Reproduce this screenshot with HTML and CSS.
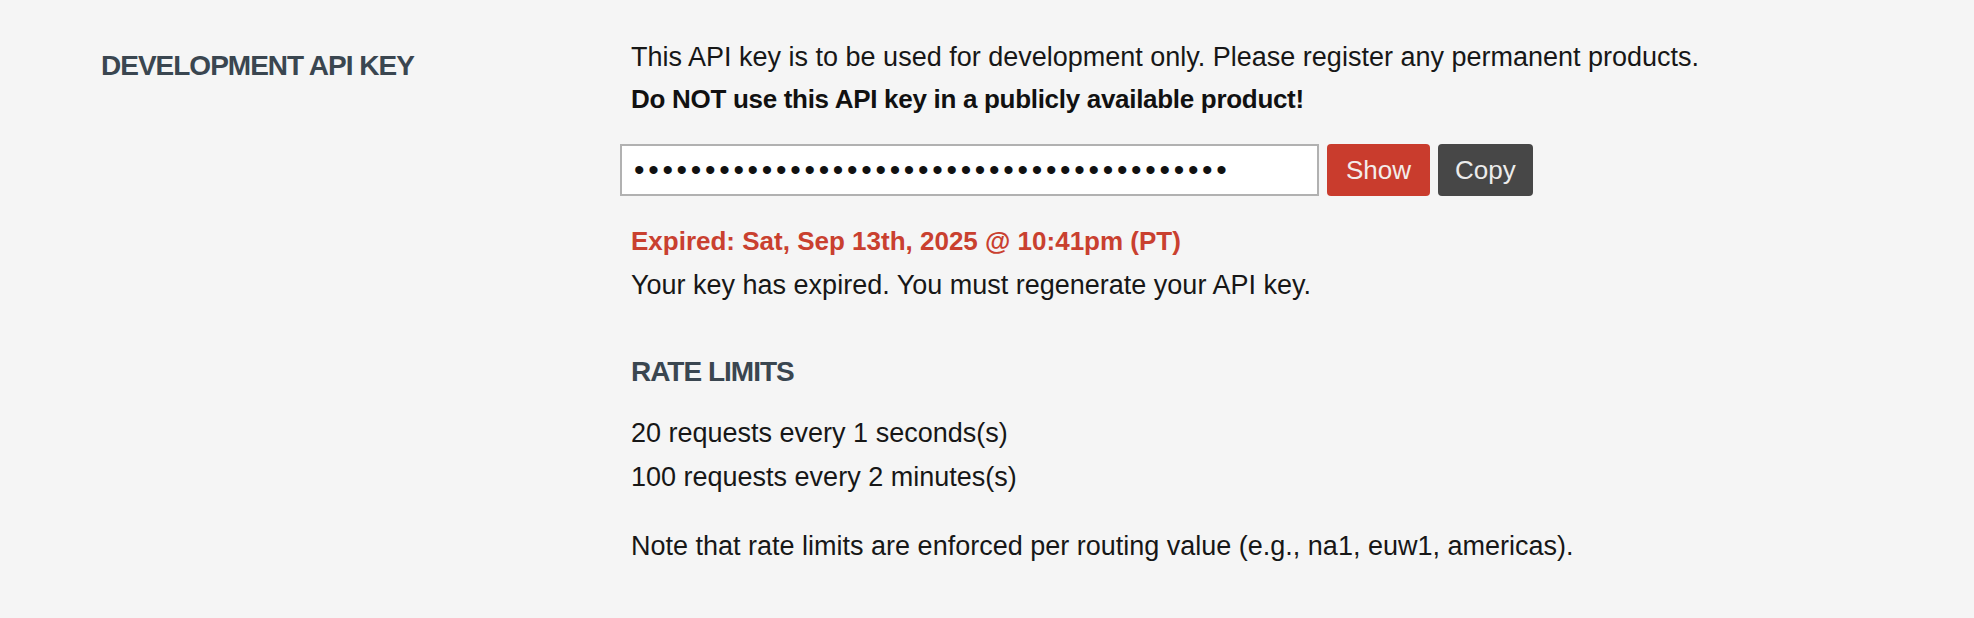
FILE: index.html
```html
<!DOCTYPE html>
<html lang="en">
<head>
<meta charset="utf-8">
<title>Development API Key</title>
<link rel="stylesheet" href="styles.css">
</head>
<body>
<section class="key-section">
  <div class="label-col">
    <h2 class="section-title">DEVELOPMENT API KEY</h2>
  </div>
  <div class="content-col">
    <p class="intro">This API key is to be used for development only. Please register any permanent products.<br><strong>Do NOT use this API key in a publicly available product!</strong></p>
    <div class="key-row">
      <input class="key-input" type="password" value="RGAPI-0a1b2c3d-4e5f-6a7b-8c9d-0e1f2a3b4c5d" readonly>
      <button class="btn btn-show" type="button">Show</button>
      <button class="btn btn-copy" type="button">Copy</button>
    </div>
    <div class="expiry">
      <p class="expired">Expired: Sat, Sep 13th, 2025 @ 10:41pm (PT)</p>
      <p>Your key has expired. You must regenerate your API key.</p>
    </div>
    <h3 class="sub-title">RATE LIMITS</h3>
    <ul class="limits">
      <li>20 requests every 1 seconds(s)</li>
      <li>100 requests every 2 minutes(s)</li>
    </ul>
    <p class="note">Note that rate limits are enforced per routing value (e.g., na1, euw1, americas).</p>
  </div>
</section>
</body>
</html>
```

FILE: styles.css
```css
html, body {
  margin: 0;
  padding: 0;
  background: #f5f5f5;
}

body {
  font-family: "Liberation Sans", Arial, sans-serif;
  font-size: 27px;
  line-height: 44px;
  color: #171717;
  height: 618px;
  overflow: hidden;
}

p, h2, h3, ul {
  margin: 0;
  padding: 0;
}

.key-section {
  display: flex;
  padding-left: 101px;
}

.label-col {
  width: 530px;
  flex: none;
}

.section-title {
  margin-top: 44px;
  font-size: 28px;
  letter-spacing: -1px;
  line-height: 44px;
  font-weight: 700;
  color: #3a4650;
}

.content-col {
  flex: 1;
  display: flex;
  flex-direction: column;
}

.intro {
  margin-top: 36px;
  line-height: 42px;
}

.intro strong {
  font-size: 26px;
  letter-spacing: -0.3px;
  font-weight: 700;
  color: #111;
}

.key-row {
  display: flex;
  align-items: stretch;
  gap: 8px;
  margin-top: 24px;
  margin-left: -11px;
  height: 52px;
}

.key-input {
  box-sizing: border-box;
  width: 699px;
  height: 52px;
  border: 2px solid #b1b1b1;
  background: #fff;
  padding: 0 12px;
  font-family: "Liberation Sans", Arial, sans-serif;
  font-size: 30px;
  letter-spacing: 3.7px;
  color: #111;
  outline: none;
}

.btn {
  border: none;
  border-radius: 4px;
  padding: 0 19px;
  height: 52px;
  font-family: "Liberation Sans", Arial, sans-serif;
  font-size: 26px;
  color: #f3ecea;
  cursor: pointer;
}

.btn-show {
  background: #c93c2d;
}

.btn-copy {
  background: #474747;
  color: #ececec;
  padding: 0 17px;
}

.expiry {
  margin-top: 23px;
}

.expired {
  font-size: 26px;
  font-weight: 700;
  color: #c9402f;
}

.sub-title {
  margin-top: 43px;
  font-size: 28px;
  letter-spacing: -1px;
  line-height: 44px;
  font-weight: 700;
  color: #3a4650;
}

.limits {
  list-style: none;
  margin-top: 17px;
}

.note {
  margin-top: 25px;
}
```
